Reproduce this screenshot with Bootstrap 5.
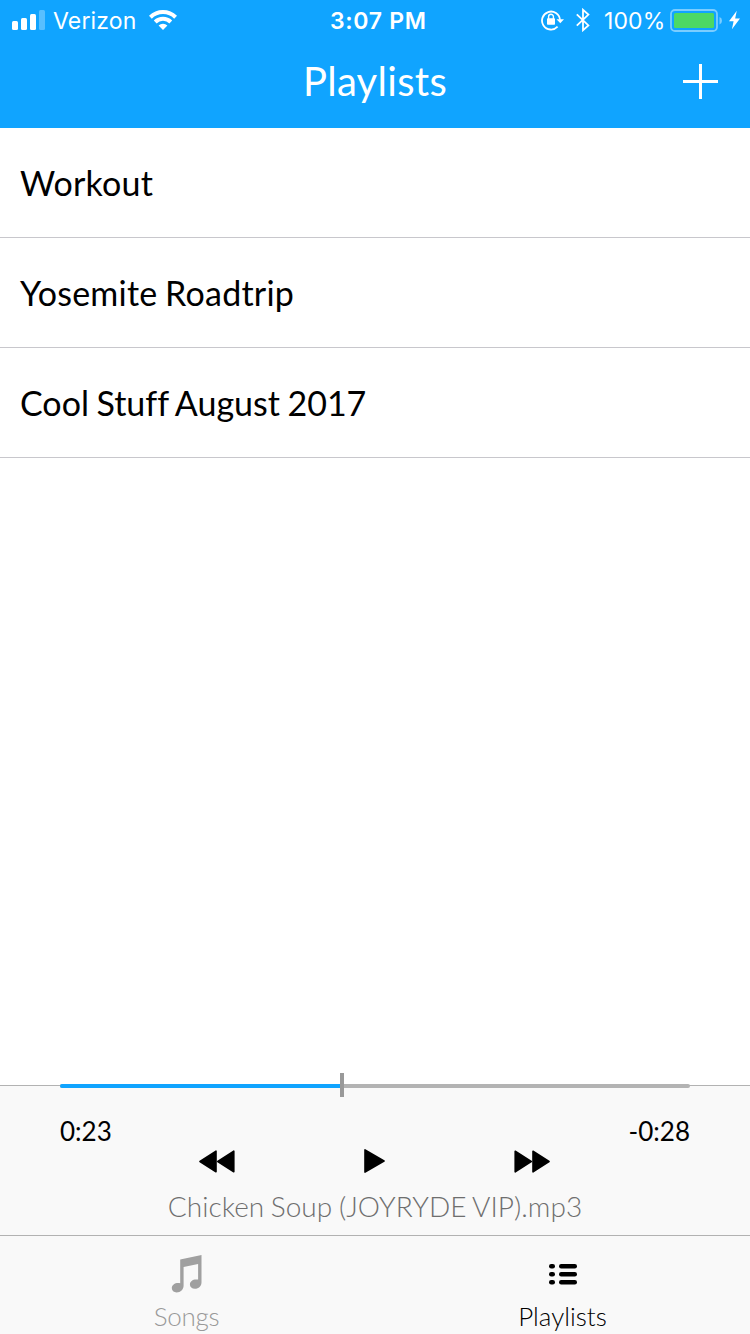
<!DOCTYPE html>
<html lang="en">
<head>
<meta charset="utf-8">
<meta name="viewport" content="width=device-width, initial-scale=1">
<title>Playlists</title>
<link href="https://cdn.jsdelivr.net/npm/bootstrap@5.3.0/dist/css/bootstrap.min.css" rel="stylesheet">
<style>
  body { font-family: Lato, "Open Sans", sans-serif; color: #000; background: #fff; font-variant-ligatures: none; }
  svg { display: block; flex: none; }
  .app-top { height: 128px; background: #10a4ff; }
  .status-bar { height: 40px; font: 400 23px/40px Inter, Roboto, sans-serif; }
  .status-bar span, .clock { padding-top: 1px; }
  .status-side { flex: 1 1 0; }
  .status-left { padding-left: 12px; }
  .status-right { padding-right: 10px; }
  .carrier { width: 96px; margin-left: 8px; letter-spacing: .15px; }
  .clock { font-weight: 600; width: 96px; letter-spacing: .7px; margin-left: 4px; }
  .charge { width: 66px; margin-left: 10px; letter-spacing: .1px; }
  .bolt { margin-left: 7px; }
  .title-bar { height: 88px; }
  .title-text { font-size: 40px; line-height: 83px; font-weight: 400; letter-spacing: .3px; }
  .title-edge { width: 67px; }
  .playlist-row { height: 110px; padding: 2px 20px 0; font-size: 34px; line-height: 1.2; word-spacing: -1.2px; border-bottom: 1px solid #c8c7cc; }
  .tracked { letter-spacing: .22px; }
  .player { height: 150px; background: #f9f9f9; border-top: 1px solid #b2b2b2; }
  .seek { height: 24px; margin: -13px 60px 0; padding-top: 2px; }
  .seek-line { height: 4px; background: #b3b3b3; border-radius: 2px; }
  .seek-fill { height: 4px; background: #10a4ff; border-radius: 2px 0 0 2px; }
  .seek-thumb { width: 4px; height: 24px; background: #999; top: 0; }
  .times { margin: 18px 60px 0; height: 32px; font-size: 26px; line-height: 32px; }
  .controls { height: 26px; margin-top: 1px; padding: 0 200px 0 199px; }
  .track-name { font-weight: 300; font-size: 28px; line-height: 36px; margin-top: 14px; letter-spacing: .03px; word-spacing: -1px; color: #6e6e6e; }
  .tab-strip { height: 99px; background: #f9f9f9; border-top: 1px solid #b2b2b2; font-weight: 300; font-size: 26px; }
  .tab-item { padding-top: 17px; line-height: 32px; color: #000; }
  .tab-item svg { margin-bottom: 7px; }
  .tab-muted { color: #999; letter-spacing: -.3px; padding-right: 2px; }
</style>
</head>
<body>
<div class="vh-100 d-flex flex-column overflow-hidden">
  <header class="app-top text-white">
    <div class="status-bar d-flex align-items-center">
      <div class="status-side status-left d-flex align-items-center">
        <svg width="33" height="20" fill="#fff"><rect y="11" width="6" height="9" rx="1.5"/><rect x="9" y="8" width="6" height="12" rx="1.5"/><rect x="18" y="4" width="6" height="16" rx="1.5"/><rect x="27" width="6" height="20" rx="1.5" opacity=".3"/></svg>
        <span class="carrier text-nowrap">Verizon</span>
        <svg width="28" height="20" viewBox="0 0 28 20" fill="none" stroke="#fff" stroke-width="4"><path d="M1.4 7.2a18 18 0 0 1 25.2 0M6.2 12a11.2 11.2 0 0 1 15.6 0"/><path d="M14 20l-4.4-4.5a6.2 6.2 0 0 1 8.8 0z" fill="#fff" stroke="none"/></svg>
      </div>
      <div class="clock text-center text-nowrap">3:07 PM</div>
      <div class="status-side status-right d-flex align-items-center justify-content-end">
        <svg width="23" height="22" viewBox="0 0 23 22"><path d="M16.6 17.7a9 9 0 1 1 2.4-6.9" fill="none" stroke="#fff" stroke-width="1.8"/><path d="M15.5 10.2H23l-3.7 4z" fill="#fff"/><rect x="6" y="9.2" width="8" height="6.6" rx=".8" fill="#fff"/><path d="M7.6 10V7.6a2.4 2.4 0 0 1 4.8 0V10" fill="none" stroke="#fff" stroke-width="1.4"/></svg>
        <svg class="ms-2" width="22" height="24" viewBox="-4 0 22 24" fill="none" stroke="#fff" stroke-width="1.8"><path d="M.8 6.4l11.6 11L7 22.2V1.8l5.4 4.8L.8 17.6"/></svg>
        <span class="charge text-nowrap">100%</span>
        <svg width="52" height="23"><rect x="1" y="1" width="46" height="21" rx="4" fill="none" stroke="#fff" stroke-opacity=".45" stroke-width="1.8"/><rect x="4" y="4" width="40" height="15" rx="1.5" fill="#4cd964"/><path d="M49.5 8q2.5.8 2.5 3.7t-2.5 3.7z" fill="#fff" opacity=".45"/></svg>
        <svg class="bolt" width="11" height="20" viewBox="0 0 12 20" fill="#fff"><path d="M8.5 0L0 11.3h5L3.2 20 12 8.4H6.7z"/></svg>
      </div>
    </div>
    <div class="title-bar d-flex justify-content-between">
      <span class="title-edge"></span>
      <h1 class="title-text m-0">Playlists</h1>
      <span class="title-edge pt-4"><svg width="36" height="35" fill="#fff"><rect y="16" width="35" height="3"/><rect x="16" width="3" height="35"/></svg></span>
    </div>
  </header>
  <main class="flex-grow-1">
    <ul class="list-unstyled m-0">
      <li class="playlist-row tracked d-flex align-items-center">Workout</li>
      <li class="playlist-row tracked d-flex align-items-center">Yosemite Roadtrip</li>
      <li class="playlist-row d-flex align-items-center">Cool Stuff August 2017</li>
    </ul>
  </main>
  <section class="player">
    <div class="seek position-relative d-flex align-items-center">
      <div class="seek-line flex-grow-1"><div class="seek-fill" style="width:44.7%"></div></div>
      <div class="seek-thumb position-absolute" style="left:44.45%"></div>
    </div>
    <div class="times d-flex justify-content-between"><span>0:23</span><span>-0:28</span></div>
    <div class="controls d-flex justify-content-between align-items-center">
      <svg width="36" height="24" viewBox="0 0 36 24" stroke="#000" stroke-width="1.6" stroke-linejoin="round"><path d="M1 12.5L17 2.2v20.6zM18.8 12.5L34.8 2.2v20.6z"/></svg>
      <svg width="21" height="24" viewBox="0 0 21 24" stroke="#000" stroke-width="1.6" stroke-linejoin="round"><path d="M1 .9L20 12 1 23.1z"/></svg>
      <svg width="36" height="24" viewBox="0 0 36 24" stroke="#000" stroke-width="1.6" stroke-linejoin="round"><path d="M1.2 2.2l16 10.3-16 10.3zM19 2.2l16 10.3-16 10.3z"/></svg>
    </div>
    <div class="track-name text-center">Chicken Soup (JOYRYDE VIP).mp3</div>
  </section>
  <nav class="tab-strip d-flex">
    <div class="tab-item tab-muted w-50 d-flex flex-column align-items-center">
      <svg width="32" height="40" viewBox="0 0 32 40" fill="#a0a0a0"><path d="M9.2 6.5L30.5 2v27.5c0 3.5-2.8 6.3-6.6 6.3-3 0-5-1.7-5-4.3 0-3.6 3.6-5.8 8.2-4.9V11L12.6 14v18.5c0 4-3 7-7 7-2.8 0-4.8-1.7-4.8-4.4 0-3.6 3.9-5.8 8.4-4.9z"/></svg>
      <span>Songs</span>
    </div>
    <div class="tab-item w-50 d-flex flex-column align-items-center">
      <svg width="28" height="40" viewBox="0 0 28 40"><g><rect y="11" width="6" height="4.4" rx="2.2"/><rect x="10" y="11" width="18" height="4.4" rx="2.2"/><rect y="19" width="6" height="4.4" rx="2.2"/><rect x="10" y="19" width="18" height="4.4" rx="2.2"/><rect y="27" width="6" height="4.4" rx="2.2"/><rect x="10" y="27" width="18" height="4.4" rx="2.2"/></g></svg>
      <span>Playlists</span>
    </div>
  </nav>
</div>
<script src="https://cdn.jsdelivr.net/npm/bootstrap@5.3.0/dist/js/bootstrap.bundle.min.js"></script>
</body>
</html>
